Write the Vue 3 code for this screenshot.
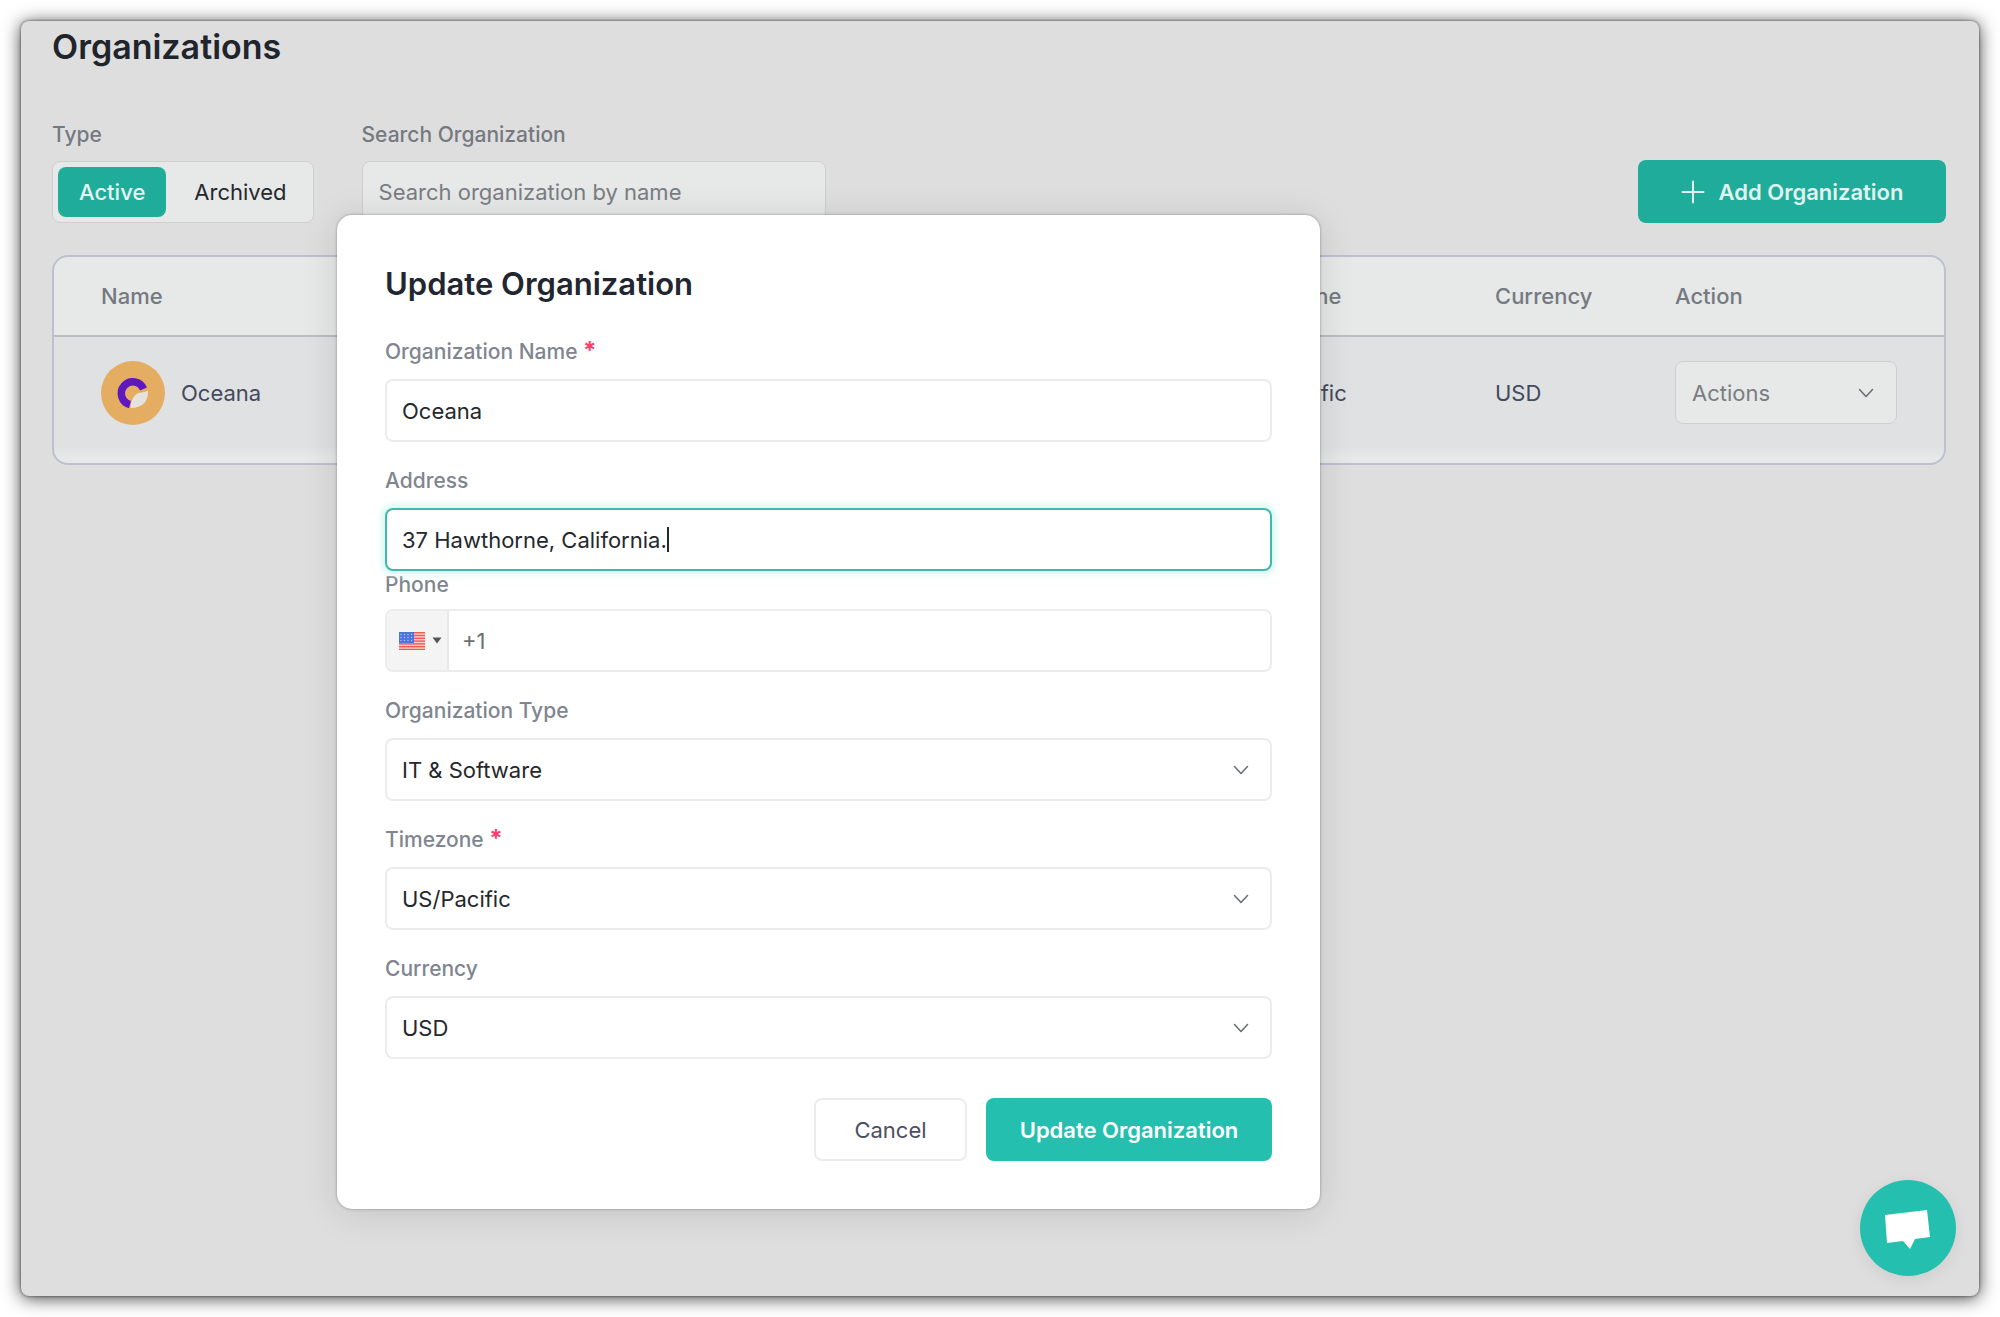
<script setup>
import { ref } from 'vue'

const type = ref('active')
const search = ref('')
const form = ref({
  name: 'Oceana',
  address: '37 Hawthorne, California.',
  phone: '+1',
  kind: 'IT & Software',
  timezone: 'US/Pacific',
  currency: 'USD',
})
const selects = [
  { key: 'kind', label: 'Organization Type', required: false },
  { key: 'timezone', label: 'Timezone', required: true },
  { key: 'currency', label: 'Currency', required: false },
]
const stripes = [0, 2, 4, 6, 8, 10, 12]
</script>

<template>
  <div class="page">
    <div class="window">
      <main class="content">
        <h1>Organizations</h1>

        <div class="toolbar">
          <div class="group">
            <span id="type-label" class="label">Type</span>
            <div class="segmented" role="group" aria-labelledby="type-label">
              <button type="button" :class="{ on: type === 'active' }" @click="type = 'active'">Active</button>
              <button type="button" :class="{ on: type === 'archived' }" @click="type = 'archived'">Archived</button>
            </div>
          </div>
          <div class="group search">
            <label class="label" for="search">Search Organization</label>
            <input id="search" v-model="search" type="text" placeholder="Search organization by name" />
          </div>
          <button type="button" class="add">
            <svg width="24" height="24" viewBox="0 0 24 24" fill="none" stroke="currentColor" stroke-width="2" stroke-linecap="round" aria-hidden="true"><path d="M12 1.500v21M1.500 12h21" /></svg>
            Add Organization
          </button>
        </div>

        <div class="card">
          <table>
            <colgroup>
              <col />
              <col class="c-zone" />
              <col class="c-currency" />
              <col class="c-action" />
            </colgroup>
            <thead>
              <tr><th>Name</th><th>Timezone</th><th>Currency</th><th>Action</th></tr>
            </thead>
            <tbody>
              <tr>
                <td>
                  <div class="org">
                    <svg width="64" height="64" viewBox="0 0 64 64" aria-hidden="true">
                      <circle cx="32" cy="32" r="32" fill="#e5ad62" />
                      <path d="M29 43.500A11.500 11.500 0 1 1 42.500 28" fill="none" stroke="#5f18bf" stroke-width="7.500" />
                      <path d="M47 29.500C47.500 40 42 47 29.500 47C30 38 34 32 40 31.500C43 31.500 45 30.500 47 29.500Z" fill="#e6e2e0" />
                    </svg>
                    <span>Oceana</span>
                  </div>
                </td>
                <td>US/Pacific</td>
                <td>USD</td>
                <td>
                  <div class="select row-select">
                    <select aria-label="Actions"><option>Actions</option></select>
                    <svg width="16" height="10" viewBox="0 0 16 10" fill="none" stroke="currentColor" stroke-width="1.500" stroke-linecap="round" stroke-linejoin="round" aria-hidden="true"><path d="M1.500 1.500L8 8.500L14.500 1.500" /></svg>
                  </div>
                </td>
              </tr>
            </tbody>
          </table>
        </div>
      </main>

      <div class="overlay">
        <form class="modal" role="dialog" aria-labelledby="dialog-title" @submit.prevent>
          <h2 id="dialog-title">Update Organization</h2>

          <div class="field">
            <label class="label" for="org-name">Organization Name <b>*</b></label>
            <input id="org-name" v-model="form.name" type="text" />
          </div>
          <div class="field active">
            <label class="label" for="address">Address</label>
            <div class="entry">
              <input id="address" v-model="form.address" type="text" />
              <i class="caret"></i>
            </div>
          </div>
          <div class="field phone">
            <label class="label" for="phone">Phone</label>
            <div class="phone-box">
              <button type="button" aria-label="Country: United States">
                <svg width="26" height="18" viewBox="0 0 26 18" aria-hidden="true">
                  <rect width="26" height="18" fill="#f4cfca" />
                  <rect v-for="s in stripes" :key="s" x="0" :y="s * 1.400" width="26" height="1.400" fill="#ee5a55" />
                  <rect width="15" height="11" fill="#4c74da" />
                  <g fill="#b4c9f5"><circle v-for="n in 12" :key="n" :cx="2 + ((n - 1) % 4) * 3.500" :cy="2.500 + Math.floor((n - 1) / 4) * 3" r="0.700" /></g>
                </svg>
                <svg width="10" height="7" viewBox="0 0 10 7" aria-hidden="true"><path d="M0.500 0.500H9.500L5 6.500Z" fill="#555" /></svg>
              </button>
              <input id="phone" v-model="form.phone" type="tel" />
            </div>
          </div>
          <div v-for="s in selects" :key="s.key" class="field">
            <label class="label" :for="s.key">{{ s.label }} <b v-if="s.required">*</b></label>
            <div class="select">
              <select :id="s.key" v-model="form[s.key]"><option>{{ form[s.key] }}</option></select>
              <svg width="16" height="10" viewBox="0 0 16 10" fill="none" stroke="currentColor" stroke-width="1.500" stroke-linecap="round" stroke-linejoin="round" aria-hidden="true"><path d="M1.500 1.500L8 8.500L14.500 1.500" /></svg>
            </div>
          </div>

          <div class="actions">
            <button type="button" class="cancel">Cancel</button>
            <button type="submit" class="save">Update Organization</button>
          </div>
        </form>
      </div>

      <button type="button" class="chat" aria-label="Open chat">
        <svg width="96" height="96" viewBox="0 0 96 96" aria-hidden="true"><path d="M25 35L67 30L70 57L55 59L50 69L43 61L27 63Z" fill="#fff" /></svg>
      </button>
    </div>
  </div>
</template>

<style>
body {
  margin: 0;
  background: #fff;
}
</style>

<style scoped>
.page,
.page * {
  box-sizing: border-box;
}
.page {
  display: flex;
  min-height: 100vh;
  padding: 21px;
  font-family: Inter, "Noto Sans", sans-serif;
  font-size: 22px;
  line-height: 28px;
  color: #24282c;
}
button,
input,
select {
  font: inherit;
  color: inherit;
  margin: 0;
}
button {
  cursor: pointer;
}
.window {
  position: relative;
  flex: 1;
  border-radius: 8px;
  background: #dedede;
  box-shadow: 0 0 3px rgba(0, 0, 0, 0.6), 0 2px 18px rgba(0, 0, 0, 0.75);
}
.content {
  padding: 6px 33px 32px 31px;
}
h1 {
  margin: 0;
  font-size: 34px;
  line-height: 40px;
  font-weight: 600;
  color: #20252c;
}
.toolbar {
  display: flex;
  align-items: flex-end;
  gap: 48px;
  margin-top: 54px;
}
.group {
  display: flex;
  flex-direction: column;
  gap: 12px;
}
.label {
  display: block;
  font-size: 21px;
  font-weight: 500;
  color: #80858f;
}
.toolbar .label {
  font-size: 21px;
  color: #757980;
}
.segmented {
  display: flex;
  height: 62px;
  padding: 5px;
  border: 1px solid #d0d0d0;
  border-radius: 8px;
  background: #e7e8e8;
}
.segmented button {
  padding: 0 21px;
  border: 0;
  border-radius: 8px;
  background: none;
  color: #24282c;
}
.segmented button + button {
  padding: 0 21px 0 28px;
}
.segmented .on {
  background: #1fac9b;
  color: #e4f4f0;
  font-weight: 500;
}
.search {
  width: 464px;
}
.search input {
  width: 100%;
  height: 62px;
  padding: 0 16px;
  border: 1px solid #d0d0d0;
  border-radius: 8px;
  background: #e7e8e8;
}
.search input::placeholder {
  color: #7a7d82;
  opacity: 1;
}
.add {
  display: flex;
  align-items: center;
  justify-content: center;
  gap: 14px;
  width: 308px;
  height: 63px;
  margin-left: auto;
  padding: 0;
  border: 0;
  border-radius: 8px;
  background: #1fac9b;
  color: #e0f3ef;
  font-weight: 600;
}
.card {
  margin-top: 32px;
  padding-bottom: 15px;
  overflow: hidden;
  border: 2px solid #bebfd0;
  border-radius: 16px;
  background: linear-gradient(#e7e8e8 86%, #dfe1e3 92%, #e7e8e8 97%);
}
table {
  width: 100%;
  table-layout: fixed;
  border-collapse: collapse;
  text-align: left;
}
.c-zone {
  width: 257px;
}
.c-currency {
  width: 180px;
}
.c-action {
  width: 269px;
}
th,
td {
  padding: 0;
}
th:first-child,
td:first-child {
  padding-left: 47px;
}
th {
  height: 79px;
  padding-bottom: 1px;
  font-weight: 500;
  color: #757980;
  border-bottom: 2px solid #bcbdc1;
}
td {
  height: 112px;
  background: #dfe1e3;
  color: #434a5c;
}
.org {
  display: flex;
  align-items: center;
  gap: 16px;
}
.select {
  position: relative;
}
.select select {
  appearance: none;
  display: block;
}
.select svg {
  position: absolute;
  right: 23px;
  top: 27px;
  color: #686b70;
  pointer-events: none;
}
.row-select {
  width: 222px;
}
.row-select select {
  width: 100%;
  height: 63px;
  padding: 0 16px;
  border: 1px solid #cdcfd1;
  border-radius: 8px;
  background: #e7e8e8;
  color: #7a7d82;
}
.overlay {
  position: absolute;
  inset: 0;
  display: flex;
  justify-content: center;
  align-items: flex-start;
  padding: 194px 343px 0 0;
}
.modal {
  width: 983px;
  padding: 49px 48px 48px;
  border-radius: 15px;
  background: #fff;
  box-shadow: 0 0 3px rgba(0, 0, 0, 0.35), 0 4px 36px rgba(0, 0, 0, 0.12);
}
h2 {
  margin: 0;
  font-size: 31px;
  line-height: 40px;
  font-weight: 600;
  color: #212630;
}
.field {
  margin-top: 25px;
}
h2 + .field {
  margin-top: 34px;
}
.field .label {
  margin-bottom: 13px;
}
.field.phone {
  margin-top: 0;
}
.phone .label {
  margin-bottom: 10px;
}
.label b {
  color: #f1416c;
  font-size: 24px;
  line-height: 24px;
}
.field input,
.field select {
  display: block;
  width: 100%;
  height: 63px;
  padding: 0 15px;
  border: 2px solid #ebecec;
  border-radius: 8px;
  background: #fff;
  outline: 0;
}
.entry {
  position: relative;
}
.field.active input {
  border-color: #3fb9ad;
  box-shadow: 0 0 6px 4px #dbf8f2;
}
.caret {
  position: absolute;
  left: 282px;
  top: 19px;
  width: 2px;
  height: 25px;
  background: #24282c;
}
.phone-box {
  display: flex;
  height: 63px;
  border: 2px solid #ebecec;
  border-radius: 8px;
  overflow: hidden;
}
.phone-box button {
  display: flex;
  flex: none;
  align-items: center;
  justify-content: flex-start;
  gap: 7px;
  width: 62px;
  padding: 0 0 0 12px;
  border: 0;
  border-right: 2px solid #e7e8e8;
  background: #f4f4f4;
}
.phone .phone-box input {
  height: 100%;
  padding: 0 13px;
  border: 0;
  border-radius: 0;
  color: #6d6f72;
}
.actions {
  display: flex;
  justify-content: flex-end;
  gap: 19px;
  margin-top: 39px;
}
.actions button {
  height: 63px;
  border-radius: 8px;
}
.cancel {
  width: 153px;
  border: 2px solid #ebecec;
  background: #fff;
  color: #4b4f63;
}
.save {
  width: 286px;
  border: 0;
  background: #24bfae;
  color: #fff;
  font-weight: 600;
}
.chat {
  position: absolute;
  right: 23px;
  bottom: 20px;
  width: 96px;
  height: 96px;
  padding: 0;
  border: 0;
  border-radius: 50%;
  background: #24bfae;
  box-shadow: 0 4px 16px rgba(0, 0, 0, 0.08);
}
.chat svg {
  display: block;
}
</style>
